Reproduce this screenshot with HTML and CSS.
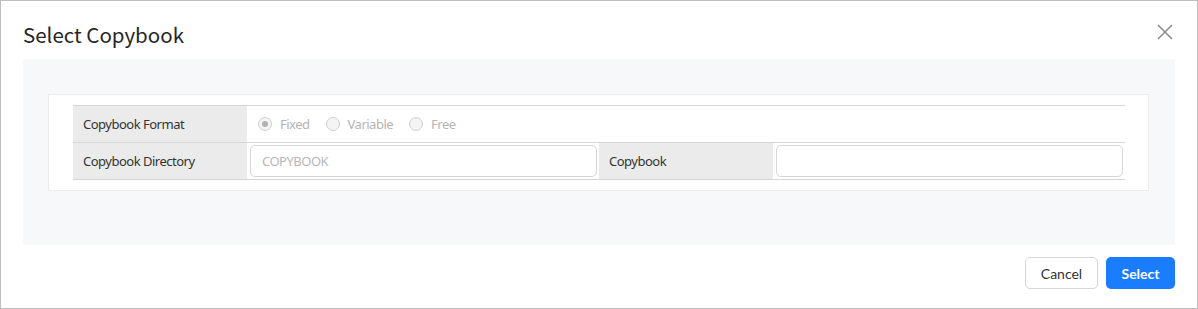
FILE: index.html
```html
<!DOCTYPE html>
<html>
<head>
  <title>Select Copybook</title>
  <link rel="stylesheet" href="styles.css">
</head>
<body>
  <div class="modal">
    <div class="modal-header">
      <h2 class="modal-title">Select Copybook</h2>
      <button type="button" class="close-btn" aria-label="Close">
        <svg width="16" height="16" viewBox="0 0 16 16"><path d="M1 1 L15 15 M15 1 L1 15" stroke="#8a8a8a" stroke-width="1.5" fill="none"/></svg>
      </button>
    </div>

    <div class="modal-body">
      <div class="card">
        <div class="form-grid">
          <div class="cell label">Copybook Format</div>
          <div class="cell value wide">
            <label class="radio checked"><span class="dot"></span>Fixed</label>
            <label class="radio"><span class="dot"></span>Variable</label>
            <label class="radio"><span class="dot"></span>Free</label>
          </div>

          <div class="cell label">Copybook Directory</div>
          <div class="cell value">
            <input type="text" class="text-input" placeholder="COPYBOOK">
          </div>
          <div class="cell label">Copybook</div>
          <div class="cell value">
            <input type="text" class="text-input">
          </div>
        </div>
      </div>
    </div>

    <div class="modal-footer">
      <button type="button" class="btn btn-cancel">Cancel</button>
      <button type="button" class="btn btn-primary">Select</button>
    </div>
  </div>
</body>
</html>
```

FILE: styles.css
```css
body {
  margin: 0;
  font-family: "Noto Sans", sans-serif;
  color: #333;
}

.modal {
  width: 1198px;
  height: 309px;
  box-sizing: border-box;
  border: 1px solid #bdbdbd;
  background: #fff;
  display: flex;
  flex-direction: column;
}

.modal-header {
  height: 58px;
  box-sizing: border-box;
  padding: 8px 22px 0 22px;
  display: flex;
  align-items: center;
  justify-content: space-between;
}

.modal-title {
  margin: 0;
  font: 400 20.5px "Noto Sans CJK KR", "Noto Sans", sans-serif;
  color: #262626;
}

.close-btn {
  border: none;
  background: none;
  padding: 0;
  width: 16px;
  height: 16px;
  margin-right: 2px;
  margin-top: -4px;
  cursor: pointer;
}

.modal-body {
  margin: 0 22px;
  height: 186px;
  box-sizing: border-box;
  background: #f7f8fa;
  padding: 35px 26px 0 25px;
}

.card {
  background: #fff;
  border: 1px solid #ebebeb;
  padding: 10px 23px 10px 24px;
}

.form-grid {
  display: grid;
  grid-template-columns: 174px 1fr 174px 1fr;
  border-top: 1px solid #d6d6d6;
}

.cell {
  height: 36px;
  border-bottom: 1px solid #d6d6d6;
  display: flex;
  align-items: center;
  font-size: 13px;
  letter-spacing: -0.5px;
}

.label {
  background: #ebebeb;
  padding-left: 10px;
  color: #333;
}

.value {
  padding: 0 2px 0 3px;
}

.wide {
  grid-column: 2 / 5;
  padding-left: 11px;
}

.radio {
  display: flex;
  align-items: center;
  color: #b4b4b4;
  margin-right: 16px;
}

.dot {
  width: 12px;
  height: 12px;
  border: 1px solid #cfcfcf;
  border-radius: 50%;
  background: #f4f4f4;
  margin-right: 8px;
  position: relative;
}

.radio.checked .dot::after {
  content: "";
  position: absolute;
  left: 3px;
  top: 3px;
  width: 6px;
  height: 6px;
  border-radius: 50%;
  background: #b0b0b0;
}

.text-input {
  width: 100%;
  height: 32px;
  box-sizing: border-box;
  border: 1px solid #d6d6d6;
  border-radius: 5px;
  padding: 0 11px;
  font: 13px "Noto Sans", sans-serif;
  letter-spacing: -0.5px;
  color: #333;
}

.text-input::placeholder {
  color: #b8b8b8;
}

.modal-footer {
  display: flex;
  justify-content: flex-end;
  gap: 8px;
  padding: 12px 22px 0 0;
}

.btn {
  height: 32px;
  border-radius: 5px;
  font: 14px Lato, "Noto Sans", sans-serif;
  cursor: pointer;
}

.btn-cancel {
  width: 73px;
  background: #fff;
  border: 1px solid #d6d6d6;
  color: #333;
}

.btn-primary {
  width: 69px;
  background: #1a7cff;
  border: none;
  color: #fff;
  font-weight: bold;
}
```
